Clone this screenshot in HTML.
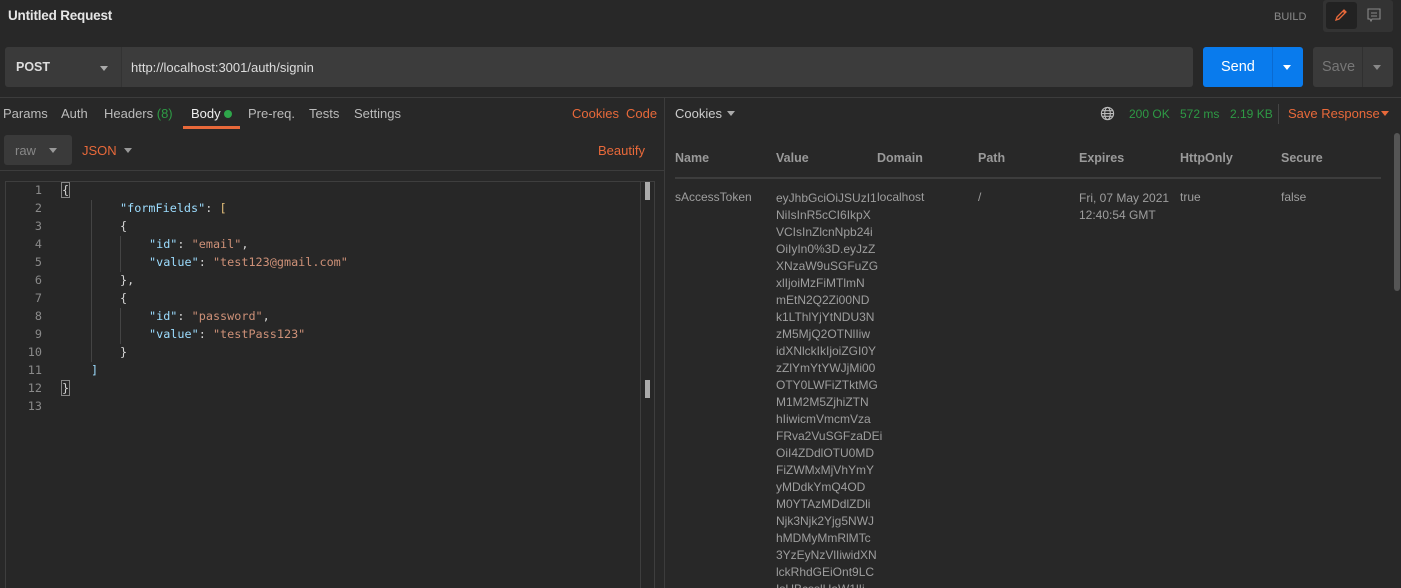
<!DOCTYPE html>
<html><head><meta charset="utf-8"><style>
*{margin:0;padding:0;box-sizing:border-box}
html,body{width:1401px;height:588px;overflow:hidden}
body{background:#282828;font-family:"Liberation Sans",sans-serif;font-size:13px;color:#c8c8c8;position:relative}
.a{position:absolute;white-space:nowrap}
.or{color:#e8693a}
.gr{color:#2e9a45}
.hd{color:#9a9a9a;font-weight:bold;font-size:12.5px}
.cv{color:#9e9e9e;font-size:12px}
.code{font-family:"DejaVu Sans Mono","Liberation Mono",monospace;font-size:11.8px}
.ln{color:#8a8a8a;text-align:right;width:30px;left:12px}
.k{color:#9cdcfe}.s{color:#ce9178}.p{color:#d4d4d4}
.tri{position:absolute;width:0;height:0;border-left:4px solid transparent;border-right:4px solid transparent;border-top:5px solid #aaa}
</style></head><body>
<div class="a" style="left:8px;top:8px;font-size:13.5px;color:#e6e6e6;font-weight:bold;letter-spacing:-0.2px">Untitled Request</div>
<div class="a" style="left:1274px;top:11px;font-size:11px;color:#8a8a8a">BUILD</div>
<div class="a" style="left:1323px;top:0;width:70px;height:32px;background:#333;border-radius:3px"></div>
<div class="a" style="left:1326px;top:2px;width:31px;height:27px;background:#222;border-radius:3px"></div>
<svg class="a" style="left:1333px;top:7px" width="16" height="16" viewBox="0 0 16 16"><path d="M3 13 L4 10 L11 3 L13 5 L6 12 Z M10 4 L12 6" fill="none" stroke="#e8693a" stroke-width="1.3"/></svg>
<svg class="a" style="left:1366px;top:7px" width="16" height="16" viewBox="0 0 16 16"><path d="M2 2 H14 V12 H6 L5 14 L4 12 H2 Z M5 6 H11 M5 9 H11" fill="none" stroke="#888" stroke-width="1.1"/></svg>

<div class="a" style="left:5px;top:47px;width:116px;height:40px;background:#3a3a3a;border-radius:3px 0 0 3px"></div>
<div class="a" style="left:16px;top:60px;font-weight:bold;color:#ddd;font-size:12.5px">POST</div>
<div class="tri" style="left:100px;top:66px"></div>
<div class="a" style="left:121px;top:47px;width:1072px;height:40px;background:#3c3c3c;border-radius:0 3px 3px 0;border-left:1px solid #333"></div>
<div class="a" style="left:131px;top:60px;color:#ddd">http://localhost:3001/auth/signin</div>
<div class="a" style="left:1203px;top:47px;width:100px;height:40px;background:#097bed;border-radius:3px"></div>
<div class="a" style="left:1272px;top:47px;width:1px;height:40px;background:#0a6ad0"></div>
<div class="a" style="left:1221px;top:59px;font-size:14.5px;color:#fff">Send</div>
<div class="tri" style="left:1283px;top:65px;border-top-color:#fff"></div>
<div class="a" style="left:1313px;top:47px;width:80px;height:40px;background:#3a3a3a;border-radius:3px"></div>
<div class="a" style="left:1362px;top:47px;width:1px;height:40px;background:#303030"></div>
<div class="a" style="left:1322px;top:59px;font-size:14.5px;color:#777">Save</div>
<div class="tri" style="left:1373px;top:65px;border-top-color:#888"></div>

<div class="a" style="left:0;top:97px;width:1401px;height:1px;background:#3c3c3c"></div>
<div class="a" style="left:664px;top:97px;width:1px;height:491px;background:#3c3c3c"></div>

<div class="a" style="left:3px;top:106px;color:#bbb">Params</div>
<div class="a" style="left:61px;top:106px;color:#bbb">Auth</div>
<div class="a" style="left:104px;top:106px;color:#bbb">Headers <span class="gr">(8)</span></div>
<div class="a" style="left:191px;top:106px;color:#eee">Body</div>
<div class="a" style="left:224px;top:110px;width:8px;height:8px;border-radius:50%;background:#2ea64a"></div>
<div class="a" style="left:183px;top:126px;width:57px;height:3px;background:#e8693a"></div>
<div class="a" style="left:248px;top:106px;color:#bbb">Pre-req.</div>
<div class="a" style="left:309px;top:106px;color:#bbb">Tests</div>
<div class="a" style="left:354px;top:106px;color:#bbb">Settings</div>
<div class="a or" style="left:572px;top:106px">Cookies</div>
<div class="a or" style="left:626px;top:106px">Code</div>

<div class="a" style="left:4px;top:135px;width:68px;height:30px;background:#3a3a3a;border-radius:3px"></div>
<div class="a" style="left:15px;top:143px;color:#888">raw</div>
<div class="tri" style="left:49px;top:148px;border-top-color:#999"></div>
<div class="a or" style="left:82px;top:143px">JSON</div>
<div class="tri" style="left:124px;top:148px;border-top-color:#999"></div>
<div class="a or" style="left:598px;top:143px">Beautify</div>
<div class="a" style="left:0;top:170px;width:664px;height:1px;background:#3c3c3c"></div>

<div class="a" style="left:5px;top:181px;width:650px;height:407px;border:1px solid #3e3e3e;border-bottom:none;background:#272727"></div>
<div class="a" style="left:640px;top:182px;width:1px;height:406px;background:#3e3e3e"></div>
<div class="a" style="left:645px;top:182px;width:5px;height:18px;background:#aaa"></div>
<div class="a" style="left:645px;top:380px;width:5px;height:18px;background:#aaa"></div>
<div class="a" style="left:91px;top:200px;width:1px;height:162px;background:#444"></div>
<div class="a" style="left:120px;top:236px;width:1px;height:36px;background:#444"></div>
<div class="a" style="left:120px;top:308px;width:1px;height:36px;background:#444"></div>

<div class="code">
<div class="a ln" style="top:183px">1</div><div class="a ln" style="top:201px">2</div><div class="a ln" style="top:219px">3</div><div class="a ln" style="top:237px">4</div><div class="a ln" style="top:255px">5</div><div class="a ln" style="top:273px">6</div><div class="a ln" style="top:291px">7</div><div class="a ln" style="top:309px">8</div><div class="a ln" style="top:327px">9</div><div class="a ln" style="top:345px">10</div><div class="a ln" style="top:363px">11</div><div class="a ln" style="top:381px">12</div><div class="a ln" style="top:399px">13</div>
<div class="a p" style="left:62px;top:183px;outline:1px solid #888">{</div>
<div class="a" style="left:120px;top:201px"><span class="k">"formFields"</span><span class="p">: </span><span style="color:#e5c07b">[</span></div>
<div class="a p" style="left:120px;top:219px">{</div>
<div class="a" style="left:149px;top:237px"><span class="k">"id"</span><span class="p">: </span><span class="s">"email"</span><span class="p">,</span></div>
<div class="a" style="left:149px;top:255px"><span class="k">"value"</span><span class="p">: </span><span class="s">"test123@gmail.com"</span></div>
<div class="a p" style="left:120px;top:273px">},</div>
<div class="a p" style="left:120px;top:291px">{</div>
<div class="a" style="left:149px;top:309px"><span class="k">"id"</span><span class="p">: </span><span class="s">"password"</span><span class="p">,</span></div>
<div class="a" style="left:149px;top:327px"><span class="k">"value"</span><span class="p">: </span><span class="s">"testPass123"</span></div>
<div class="a p" style="left:120px;top:345px">}</div>
<div class="a k" style="left:91px;top:363px">]</div>
<div class="a p" style="left:62px;top:381px;outline:1px solid #888">}</div>
</div>

<div class="a" style="left:675px;top:106px;color:#ccc">Cookies</div>
<div class="tri" style="left:727px;top:111px;border-top-color:#aaa"></div>
<svg class="a" style="left:1100px;top:106px" width="15" height="15" viewBox="0 0 16 16"><g fill="none" stroke="#bbb" stroke-width="1.2"><circle cx="8" cy="8" r="6.5"/><ellipse cx="8" cy="8" rx="3" ry="6.5"/><path d="M1.5 8H14.5M2.5 5H13.5M2.5 11H13.5"/></g></svg>
<div class="a gr" style="left:1129px;top:107px;font-size:12px">200 OK</div>
<div class="a gr" style="left:1180px;top:107px;font-size:12px">572 ms</div>
<div class="a gr" style="left:1230px;top:107px;font-size:12px">2.19 KB</div>
<div class="a" style="left:1278px;top:104px;width:1px;height:20px;background:#444"></div>
<div class="a or" style="left:1288px;top:106px">Save Response</div>
<div class="tri" style="left:1381px;top:111px;border-top-color:#e8693a"></div>

<div class="a hd" style="left:675px;top:151px">Name</div>
<div class="a hd" style="left:776px;top:151px">Value</div>
<div class="a hd" style="left:877px;top:151px">Domain</div>
<div class="a hd" style="left:978px;top:151px">Path</div>
<div class="a hd" style="left:1079px;top:151px">Expires</div>
<div class="a hd" style="left:1180px;top:151px">HttpOnly</div>
<div class="a hd" style="left:1281px;top:151px">Secure</div>
<div class="a" style="left:675px;top:177px;width:706px;height:2px;background:#3d3d3d"></div>
<div class="a" style="left:1394px;top:133px;width:6px;height:158px;background:#555;border-radius:3px"></div>

<div class="a cv" style="left:675px;top:190px">sAccessToken</div>
<div class="a cv" style="left:776px;top:190px;line-height:17px;white-space:pre;height:398px;overflow:hidden">eyJhbGciOiJSUzI1
NiIsInR5cCI6IkpX
VCIsInZlcnNpb24i
OiIyIn0%3D.eyJzZ
XNzaW9uSGFuZG
xlIjoiMzFiMTlmN
mEtN2Q2Zi00ND
k1LThlYjYtNDU3N
zM5MjQ2OTNlIiw
idXNlckIkIjoiZGI0Y
zZlYmYtYWJjMi00
OTY0LWFiZTktMG
M1M2M5ZjhiZTN
hIiwicmVmcmVza
FRva2VuSGFzaDEi
OiI4ZDdlOTU0MD
FiZWMxMjVhYmY
yMDdkYmQ4OD
M0YTAzMDdlZDli
Njk3Njk2Yjg5NWJ
hMDMyMmRlMTc
3YzEyNzVlIiwidXN
lckRhdGEiOnt9LC
IsUBcsslUaW1lIj</div>
<div class="a cv" style="left:877px;top:190px">localhost</div>
<div class="a cv" style="left:978px;top:190px">/</div>
<div class="a cv" style="left:1079px;top:190px;line-height:17px">Fri, 07 May 2021<br>12:40:54 GMT</div>
<div class="a cv" style="left:1180px;top:190px">true</div>
<div class="a cv" style="left:1281px;top:190px">false</div>
</body></html>
